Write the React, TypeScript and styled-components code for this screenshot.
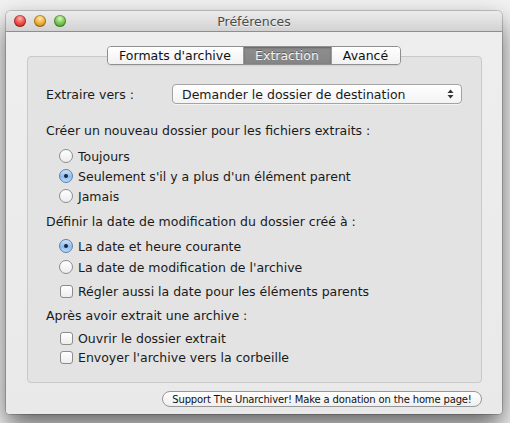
import React from "react";
import styled, { createGlobalStyle, css } from "styled-components";

const GlobalStyle = createGlobalStyle`
  html, body {
    margin: 0;
    padding: 0;
    background: #f2f2f2;
  }
  body {
    font-family: "DejaVu Sans", "Noto Sans", sans-serif;
    font-size: 12.5px;
    color: #1a1a1a;
    overflow: hidden;
  }
`;

const Page = styled.div`
  width: 510px;
  height: 423px;
  padding: 11px 8px 0 6px;
  box-sizing: border-box;
`;

const Window = styled.div`
  width: 496px;
  height: 403px;
  display: flex;
  flex-direction: column;
  background: #ececec;
  border-radius: 5px 5px 4px 4px;
  box-shadow: 0 0 0 1px rgba(0, 0, 0, 0.18), 0 12px 26px rgba(0, 0, 0, 0.6);
  overflow: hidden;
`;

const TitleBar = styled.div`
  position: relative;
  height: 21px;
  display: flex;
  align-items: center;
  justify-content: center;
  background: linear-gradient(#ececec, #d2d2d2);
  border-bottom: 1px solid #8e8e8e;
  box-sizing: border-box;
`;

const Lights = styled.div`
  position: absolute;
  left: 8px;
  top: 4px;
  display: flex;
  gap: 8px;
`;

const Light = styled.span<{ $tone: "red" | "yellow" | "green" }>`
  width: 12px;
  height: 12px;
  border-radius: 50%;
  box-shadow: inset 0 0 0 1px rgba(0, 0, 0, 0.28);
  ${({ $tone }) =>
    $tone === "red"
      ? css`background: radial-gradient(circle at 50% 30%, #ffb3b3 0, #f0524a 45%, #b3140e 100%);`
      : $tone === "yellow"
      ? css`background: radial-gradient(circle at 50% 30%, #ffe7b0 0, #f0b23a 45%, #b46f07 100%);`
      : css`background: radial-gradient(circle at 50% 30%, #d9f7c6 0, #7ac855 45%, #3b8a1c 100%);`}
`;

const Title = styled.div`
  font-size: 12.5px;
  color: #4a4a4a;
  text-shadow: 0 1px 0 rgba(255, 255, 255, 0.6);
`;

const Body = styled.div`
  flex: 1;
  display: flex;
  flex-direction: column;
  padding: 14px 20px 0 21px;
  background: linear-gradient(#eeeeee, #e9e9e9);
`;

const TabStrip = styled.div`
  position: relative;
  z-index: 1;
  display: flex;
  align-self: center;
  height: 19px;
  margin-left: -2px;
  border: 1px solid #8f8f8f;
  border-radius: 4px;
  box-sizing: border-box;
  overflow: hidden;
  box-shadow: 0 1px 1px rgba(0, 0, 0, 0.08);
`;

const Tab = styled.div<{ $active?: boolean; $w: number }>`
  width: ${({ $w }) => $w}px;
  display: flex;
  align-items: center;
  justify-content: center;
  font-size: 12.5px;
  border-left: 1px solid #9a9a9a;
  &:first-child {
    border-left: 0;
  }
  ${({ $active }) =>
    $active
      ? css`
          background: linear-gradient(#8e8e8e, #858585);
          color: #f2f2f2;
          text-shadow: 0 -1px 0 rgba(0, 0, 0, 0.35);
          box-shadow: inset 0 1px 2px rgba(0, 0, 0, 0.3);
        `
      : css`
          background: linear-gradient(#ffffff, #f1f1f1);
          color: #111;
        `}
`;

const Panel = styled.div`
  margin-top: -9px;
  height: 327px;
  box-sizing: border-box;
  padding: 27px 0 0 18px;
  background: #e3e3e3;
  border: 1px solid #c9c9c9;
  border-radius: 4px;
  display: flex;
  flex-direction: column;
`;

const FieldRow = styled.div`
  display: flex;
  align-items: center;
  height: 20px;
`;

const FieldLabel = styled.span`
  width: 126px;
`;

const Popup = styled.div`
  width: 290px;
  height: 20px;
  box-sizing: border-box;
  display: flex;
  align-items: center;
  justify-content: space-between;
  padding: 0 7px 0 9px;
  background: linear-gradient(#ffffff, #f3f3f3);
  border: 1px solid #a3a3a3;
  border-radius: 4px;
  box-shadow: 0 1px 0 rgba(255, 255, 255, 0.6);
`;

const Stepper = styled.svg`
  display: block;
`;

const SectionLabel = styled.div<{ $top: number }>`
  margin-top: ${({ $top }) => $top}px;
  line-height: 18px;
`;

const Options = styled.div<{ $top: number }>`
  margin-top: ${({ $top }) => $top}px;
  margin-left: 13px;
  display: flex;
  flex-direction: column;
`;

const Option = styled.label<{ $h?: number; $top?: number }>`
  display: flex;
  align-items: center;
  gap: 5px;
  height: ${({ $h }) => $h ?? 20}px;
  margin-top: ${({ $top }) => $top ?? 0}px;
`;

const Radio = styled.span<{ $on?: boolean }>`
  width: 14px;
  height: 14px;
  box-sizing: border-box;
  border-radius: 50%;
  display: flex;
  align-items: center;
  justify-content: center;
  ${({ $on }) =>
    $on
      ? css`
          border: 1px solid #5b7fa9;
          background: linear-gradient(#cfe4fb, #8fbdef 55%, #b9d8f8);
          &::after {
            content: "";
            width: 4px;
            height: 4px;
            border-radius: 50%;
            background: #1c2836;
          }
        `
      : css`
          border: 1px solid #8c8c8c;
          background: linear-gradient(#ffffff, #ececec);
        `}
`;

const Check = styled.span`
  width: 13px;
  height: 13px;
  margin-left: 1px;
  box-sizing: border-box;
  border: 1px solid #8c8c8c;
  border-radius: 3px;
  background: linear-gradient(#ffffff, #ededed);
`;

const Footer = styled.div`
  display: flex;
  justify-content: flex-end;
  padding: 8px 0 0;
`;

const DonateButton = styled.div`
  width: 320px;
  height: 16px;
  box-sizing: border-box;
  display: flex;
  align-items: center;
  justify-content: center;
  font-size: 10px;
  letter-spacing: -0.15px;
  white-space: nowrap;
  color: #111;
  background: linear-gradient(#ffffff, #efefef);
  border: 1px solid #979797;
  border-radius: 8px;
`;

const App: React.FC = () => {
  return (
    <>
      <GlobalStyle />
      <Page>
        <Window>
          <TitleBar>
            <Lights>
              <Light $tone="red" />
              <Light $tone="yellow" />
              <Light $tone="green" />
            </Lights>
            <Title>Préférences</Title>
          </TitleBar>
          <Body>
            <TabStrip>
              <Tab $w={135}>Formats d'archive</Tab>
              <Tab $w={87} $active>
                Extraction
              </Tab>
              <Tab $w={68}>Avancé</Tab>
            </TabStrip>
            <Panel>
              <FieldRow>
                <FieldLabel>Extraire vers :</FieldLabel>
                <Popup>
                  <span>Demander le dossier de destination</span>
                  <Stepper width="7" height="10" viewBox="0 0 7 10">
                    <path d="M3.5 0.5 L6.5 4 L0.5 4 Z" fill="#333" />
                    <path d="M3.5 9.5 L6.5 6 L0.5 6 Z" fill="#333" />
                  </Stepper>
                </Popup>
              </FieldRow>

              <SectionLabel $top={18}>
                Créer un nouveau dossier pour les fichiers extraits :
              </SectionLabel>
              <Options $top={6}>
                <Option>
                  <Radio />
                  Toujours
                </Option>
                <Option>
                  <Radio $on />
                  Seulement s'il y a plus d'un élément parent
                </Option>
                <Option>
                  <Radio />
                  Jamais
                </Option>
              </Options>

              <SectionLabel $top={7}>
                Définir la date de modification du dossier créé à :
              </SectionLabel>
              <Options $top={5}>
                <Option>
                  <Radio $on />
                  La date et heure courante
                </Option>
                <Option $top={1}>
                  <Radio />
                  La date de modification de l'archive
                </Option>
                <Option $top={4}>
                  <Check />
                  Régler aussi la date pour les éléments parents
                </Option>
              </Options>

              <SectionLabel $top={6}>Après avoir extrait une archive :</SectionLabel>
              <Options $top={3}>
                <Option>
                  <Check />
                  Ouvrir le dossier extrait
                </Option>
                <Option $h={19}>
                  <Check />
                  Envoyer l'archive vers la corbeille
                </Option>
              </Options>
            </Panel>
            <Footer>
              <DonateButton>
                Support The Unarchiver! Make a donation on the home page!
              </DonateButton>
            </Footer>
          </Body>
        </Window>
      </Page>
    </>
  );
};

export default App;
